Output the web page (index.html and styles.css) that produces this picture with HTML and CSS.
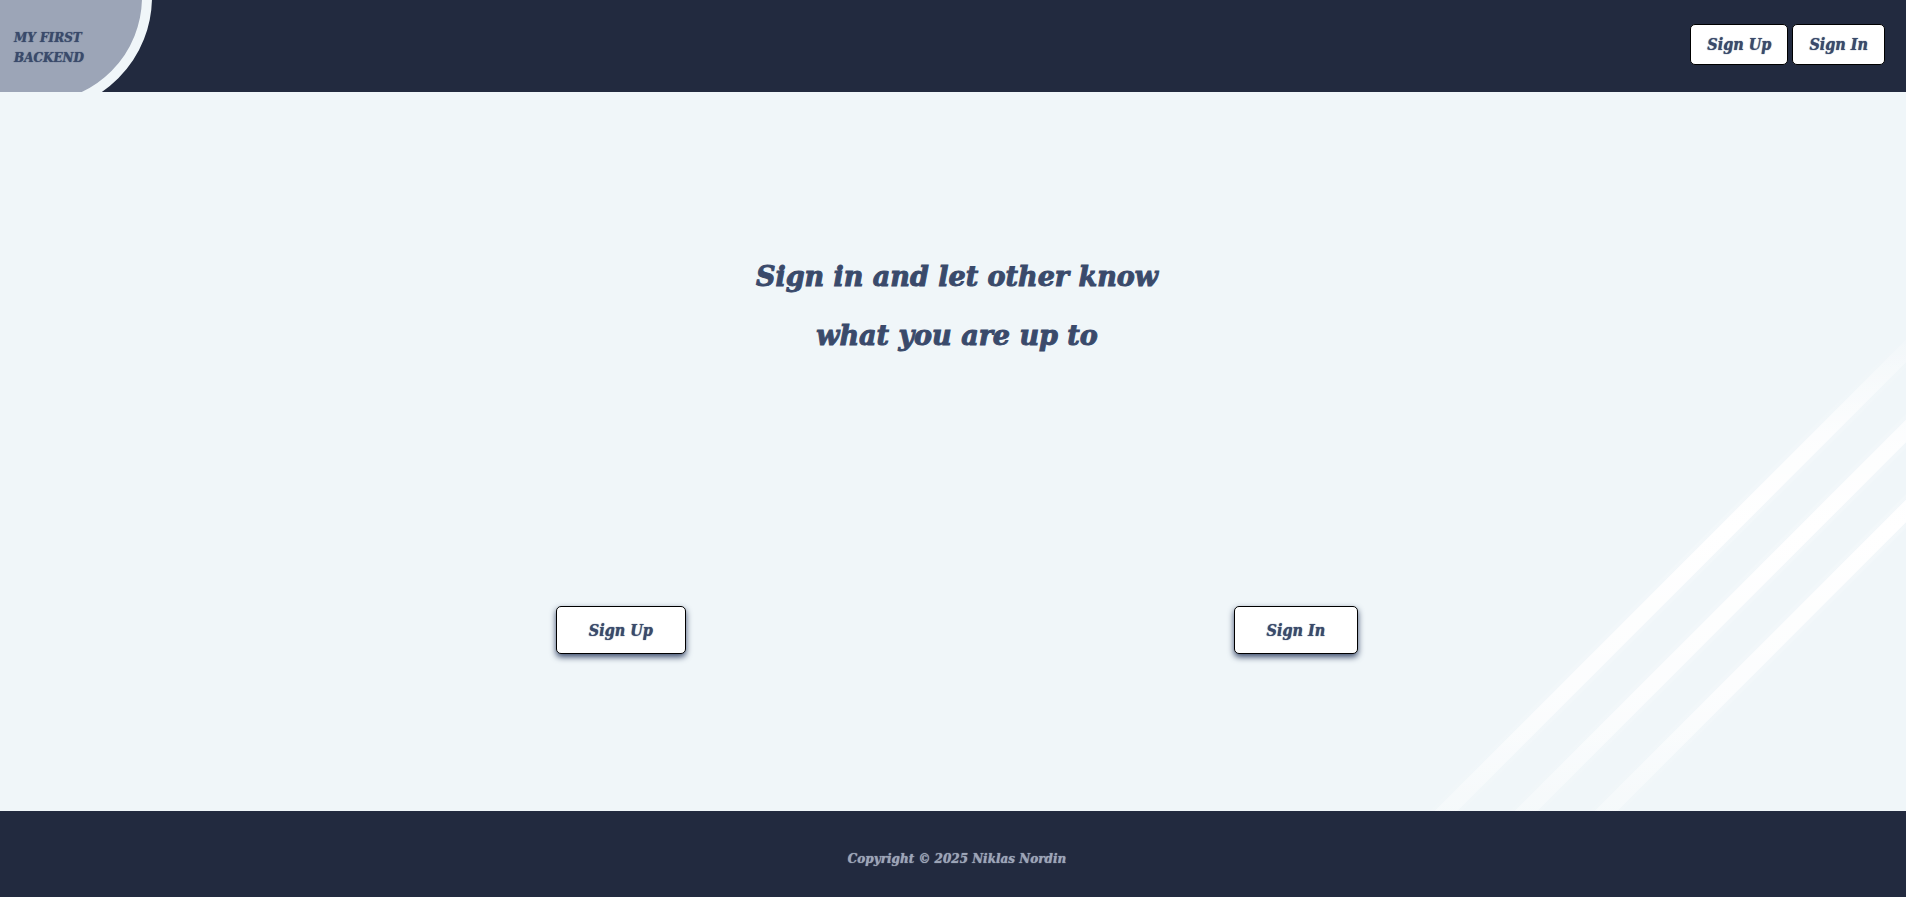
FILE: index.html
```html
<!DOCTYPE html>
<html lang="en">
<head>
<meta charset="utf-8">
<title>My First Backend</title>
<link rel="stylesheet" href="styles.css">
</head>
<body>
<header class="header">
  <a class="logo" href="#">MY FIRST<br>BACKEND</a>
  <nav class="nav">
    <button class="button" type="button">Sign Up</button>
    <button class="button" type="button">Sign In</button>
  </nav>
</header>
<main class="main">
  <svg class="stripes" viewBox="0 0 520 500" width="520" height="500" aria-hidden="true">
    <defs>
      <linearGradient id="fade" gradientUnits="userSpaceOnUse" x1="0" y1="10" x2="0" y2="560">
        <stop offset="0" stop-color="#fff" stop-opacity="0"/>
        <stop offset=".1" stop-color="#fff" stop-opacity=".4"/>
        <stop offset=".22" stop-color="#fff" stop-opacity=".82"/>
        <stop offset=".38" stop-color="#fff" stop-opacity="1"/>
        <stop offset=".68" stop-color="#fff" stop-opacity=".75"/>
        <stop offset="1" stop-color="#fff" stop-opacity=".1"/>
      </linearGradient>
    </defs>
    <g stroke="url(#fade)" fill="none">
      <path stroke-width="24" opacity=".18" d="M40 520L540 20M120 520L540 100M200 520L540 180"/>
      <path stroke-width="16" d="M40 520L540 20M120 520L540 100M200 520L540 180"/>
    </g>
  </svg>
  <h1 class="title">Sign in and let other know<br>what you are up to</h1>
  <div class="actions">
    <button class="button button-large" type="button">Sign Up</button>
    <button class="button button-large" type="button">Sign In</button>
  </div>
</main>
<footer class="footer">Copyright © 2025 Niklas Nordin</footer>
</body>
</html>
```
FILE: styles.css
```css
* { box-sizing: border-box; }

body {
  margin: 0;
  min-height: 100vh;
  display: flex;
  flex-direction: column;
  background: #f0f6f9;
  color: #3a4a6b;
  font-family: "DejaVu Serif", serif;
  font-weight: 900;
  font-style: italic;
}

.header {
  position: relative;
  overflow: hidden;
  display: flex;
  justify-content: space-between;
  align-items: flex-start;
  padding: 24px 21px 24px 14px;
  background: #222a3f;
}

.header::before {
  content: "";
  position: absolute;
  box-sizing: border-box;
  left: -78px;
  top: -118px;
  width: 230px;
  height: 230px;
  border: 10px solid #f0f6f9;
  border-radius: 50%;
  background: #9ca5b7;
}

.logo {
  position: relative;
  padding-top: 4px;
  font-size: 12px;
  line-height: 20px;
  color: inherit;
  text-decoration: none;
  text-shadow: 0 0 1px currentColor;
}

.nav { display: flex; gap: 4px; }

.button {
  padding: 0 16px;
  height: 41px;
  border: 1px solid #000;
  border-radius: 5px;
  background: #fff;
  color: inherit;
  font: inherit;
  font-family: "DejaVu Serif Condensed", "DejaVu Serif", serif;
  font-stretch: condensed;
  font-size: 16px;
  text-shadow: 0 0 1px currentColor;
}

.button-large {
  height: 48px;
  padding: 0 32px;
  box-shadow: 0 3px 6px #3a4a6b;
}

.main {
  flex: 1;
  position: relative;
  overflow: hidden;
  display: flex;
  flex-direction: column;
  justify-content: space-between;
  padding: 155px 0 157px 8px;
}

.stripes {
  position: absolute;
  right: 0;
  bottom: 0;
}

.title {
  margin: 0;
  text-align: center;
  font-size: 27px;
  font-weight: inherit;
  line-height: 59px;
  -webkit-text-stroke: 1px currentColor;
}

.actions {
  position: relative;
  display: flex;
  justify-content: space-evenly;
}

.footer {
  padding: 38px 0 28px 8px;
  background: #222a3f;
  color: #9ca5b7;
  text-align: center;
  font-size: 12px;
  line-height: 20px;
  text-shadow: 0 0 1px currentColor;
}
```
